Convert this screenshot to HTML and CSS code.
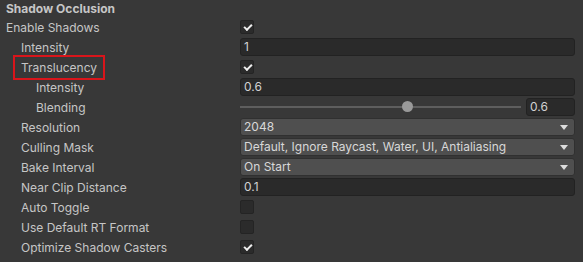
FILE: index.html
```html
<!DOCTYPE html>
<html>
<head>
<meta charset="utf-8">
<link rel="stylesheet" href="styles.css">
</head>
<body>
<div class="panel">
  <div class="heading">Shadow Occlusion</div>
  <div class="row"><div class="label l0">Enable Shadows</div><div class="field"><span class="check on"></span></div></div>
  <div class="row"><div class="label l1">Intensity</div><div class="field"><div class="text">1</div></div></div>
  <div class="row"><div class="label l1"><span class="hl">Translucency</span></div><div class="field"><span class="check on"></span></div></div>
  <div class="row"><div class="label l2">Intensity</div><div class="field"><div class="text">0.6</div></div></div>
  <div class="row"><div class="label l2">Blending</div><div class="field slider-field"><div class="track"><span class="thumb"></span></div><div class="text num">0.6</div></div></div>
  <div class="row"><div class="label l1">Resolution</div><div class="field"><div class="drop">2048<span class="arrow"></span></div></div></div>
  <div class="row"><div class="label l1">Culling Mask</div><div class="field"><div class="drop">Default, Ignore Raycast, Water, UI, Antialiasing<span class="arrow"></span></div></div></div>
  <div class="row"><div class="label l1">Bake Interval</div><div class="field"><div class="drop">On Start<span class="arrow"></span></div></div></div>
  <div class="row"><div class="label l1">Near Clip Distance</div><div class="field"><div class="text">0.1</div></div></div>
  <div class="row"><div class="label l1">Auto Toggle</div><div class="field"><span class="check"></span></div></div>
  <div class="row"><div class="label l1">Use Default RT Format</div><div class="field"><span class="check"></span></div></div>
  <div class="row"><div class="label l1">Optimize Shadow Casters</div><div class="field"><span class="check on"></span></div></div>
</div>
</body>
</html>
```
FILE: styles.css
```css
html, body {
  margin: 0;
  padding: 0;
  background: #383838;
}
body {
  width: 583px;
  height: 262px;
  overflow: hidden;
  font-family: Inter, "Noto Sans", sans-serif;
  font-size: 12px;
  color: #c6c6c6;
}
.panel {
  display: flex;
  flex-direction: column;
  padding-right: 8px;
}
.heading {
  height: 17px;
  line-height: 17px;
  padding-left: 6px;
  font-weight: 700;
  color: #c6c6c6;
}
.row {
  height: 20px;
  display: flex;
  align-items: center;
}
.label {
  width: 240px;
  flex: none;
  white-space: nowrap;
}
.l0 { padding-left: 6px; box-sizing: border-box; }
.l1 { padding-left: 21px; box-sizing: border-box; }
.l2 { padding-left: 36px; box-sizing: border-box; }
.hl {
  position: relative;
}
.hl::after {
  content: "";
  position: absolute;
  left: -8px;
  right: -8px;
  top: -5px;
  bottom: -5px;
  border: 2px solid #d9151b;
}
.field {
  flex: 1;
  display: flex;
  align-items: center;
  height: 18px;
}
.text {
  flex: 1;
  height: 18px;
  box-sizing: border-box;
  background: #2a2a2a;
  border: 1px solid #222;
  border-radius: 3px;
  padding-left: 3px;
  line-height: 16px;
  color: #d2d2d2;
}
.drop {
  flex: 1;
  position: relative;
  height: 18px;
  box-sizing: border-box;
  background: #4f4f4f;
  border: 1px solid #303030;
  border-radius: 3px;
  padding-left: 3px;
  line-height: 16px;
  color: #d8d8d8;
}
.arrow {
  position: absolute;
  right: 6px;
  top: 6px;
  width: 0;
  height: 0;
  border-left: 4px solid transparent;
  border-right: 4px solid transparent;
  border-top: 5px solid #dcdcdc;
}
.check {
  width: 14px;
  height: 14px;
  box-sizing: border-box;
  background: #2b2b2b;
  border: 1px solid #242424;
  border-radius: 2px;
  position: relative;
}
.check.on::after {
  content: "";
  position: absolute;
  left: 3px;
  top: 1px;
  width: 6px;
  height: 3px;
  border-left: 2px solid #eeeeee;
  border-bottom: 2px solid #eeeeee;
  transform: translate(0, 2px) rotate(-45deg);
}
.slider-field {
  gap: 5px;
}
.track {
  flex: 1;
  height: 2px;
  background: #5e5e5e;
  position: relative;
}
.thumb {
  position: absolute;
  left: 162px;
  top: -5px;
  width: 11px;
  height: 11px;
  border-radius: 50%;
  background: #999999;
}
.text.num {
  flex: none;
  width: 49px;
}
```
